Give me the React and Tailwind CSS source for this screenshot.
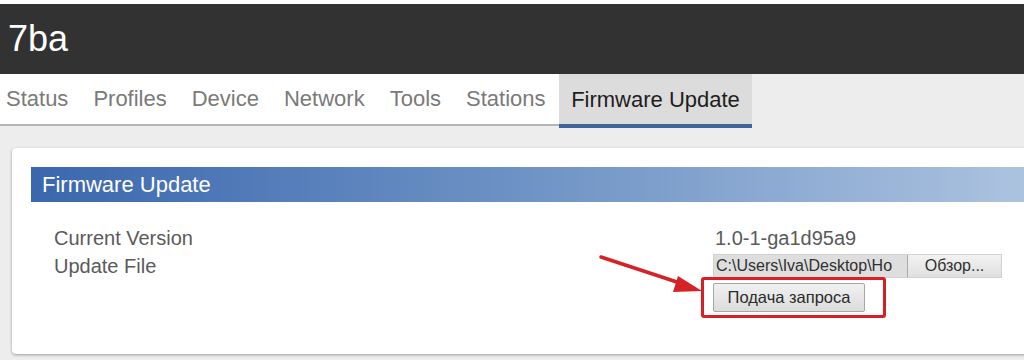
import React from "react";

const tabs = ["Status", "Profiles", "Device", "Network", "Tools", "Stations"];

export default function App() {
  return (
    <div className="w-[1024px] h-[360px] overflow-hidden bg-[#ededed] font-['Liberation_Sans',Arial,sans-serif]">
      <div className="h-[4px] bg-white" />
      <div className="h-[70px] bg-[#323232] flex items-center pl-[8px]">
        <span className="text-white text-[36px] leading-none">7ba</span>
      </div>

      <div className="flex h-[54px] items-start">
        <div className="flex items-center h-[52px] w-[559px] bg-white border-b-2 border-[#b5b5b5] pl-[6px] gap-[25px]">
          {tabs.map((t) => (
            <span key={t} className="text-[22px] text-[#7a7a7a] leading-none">{t}</span>
          ))}
        </div>
        <div className="h-[54px] w-[193px] bg-[#dcdcdc] border-b-4 border-[#3f6699] flex items-center justify-center">
          <span className="text-[22px] text-[#1e1e1e] leading-none pt-[2px]">Firmware Update</span>
        </div>
      </div>

      <div className="pl-[12px] pt-[20px]">
        <div className="w-[1060px] h-[206px] bg-white rounded-[4px] shadow-[0_1px_3px_rgba(0,0,0,0.35)] pt-[19px] pl-[19px]">
          <div className="h-[35px] bg-gradient-to-r from-[#3a67ad] via-[#7195c6] to-[#b2c7e2] flex items-center pl-[11px]">
            <span className="text-white text-[22px] leading-none">Firmware Update</span>
          </div>

          <div className="flex pl-[23px] pt-[22px] text-[20px] text-[#5a5a5a]">
            <div className="w-[659px]">
              <div className="h-[28px] leading-[28px]">Current Version</div>
              <div className="h-[28px] leading-[28px]">Update File</div>
            </div>
            <div className="relative">
              <div className="h-[28px] leading-[28px] pl-[2px]">1.0-1-ga1d95a9</div>
              <div className="h-[28px] flex items-center">
                <div className="flex h-[24px] w-[289px] bg-[#dedede] text-[16px] text-[#303030] border border-[#d0d0d0]">
                  <div className="w-[193px] overflow-hidden whitespace-nowrap leading-[22px] pl-[2px]">
                    C:\Users\Iva\Desktop\Но
                  </div>
                  <div className="flex-1 flex items-center justify-center bg-gradient-to-b from-[#f2f2f2] to-[#e0e0e0] border-l border-[#a9a9a9] leading-none">
                    Обзор...
                  </div>
                </div>
              </div>
              <div className="mt-[3px] w-[152px] h-[29px] flex items-center justify-center bg-gradient-to-b from-[#f1f1f1] to-[#dcdcdc] border border-[#a6a6a6] rounded-[2px] text-[16.5px] text-[#2b2b2b] leading-none">
                Подача запроса
              </div>
              <div className="absolute left-[-12px] top-[53px] w-[185px] h-[41px] border-[3px] border-[#d81f26] rounded-[3px]" />
              <svg className="absolute left-[-115px] top-[30px]" width="106" height="42" viewBox="0 0 106 42">
                <line x1="3" y1="3" x2="88" y2="31" stroke="#d42227" strokeWidth="3.5" strokeLinecap="round" />
                <polygon points="104,37 80,22 75,38" fill="#d42227" />
              </svg>
            </div>
          </div>
        </div>
      </div>
    </div>
  );
}
